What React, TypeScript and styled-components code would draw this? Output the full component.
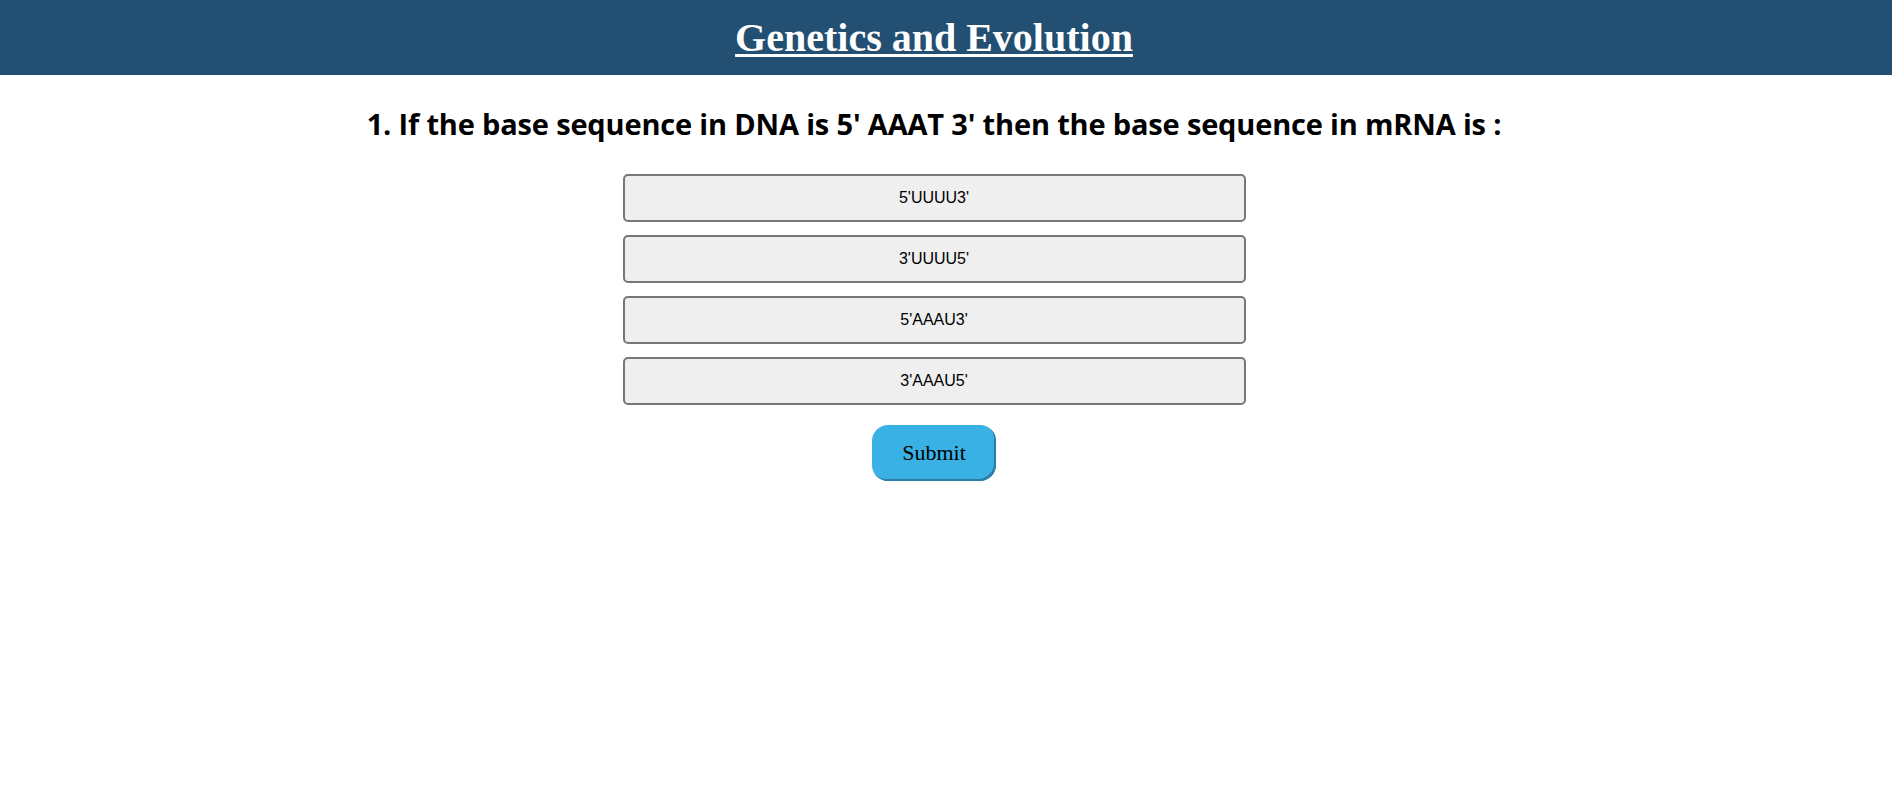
import React from "react";
import styled, { createGlobalStyle } from "styled-components";

const GlobalStyle = createGlobalStyle`
  html, body {
    margin: 0;
    padding: 0;
    background: #ffffff;
  }
  body {
    font-family: "Liberation Serif", "Times New Roman", serif;
  }
`;

const Header = styled.header`
  background: #234f72;
  height: 75px;
  box-sizing: border-box;
  padding: 15px 24px 0 0;
  display: flex;
  justify-content: center;
`;

const Title = styled.h1`
  margin: 0;
  font-family: "Liberation Serif", "Times New Roman", serif;
  font-weight: 700;
  font-size: 40px;
  line-height: 46px;
  color: #ffffff;
  text-decoration: underline;
  text-decoration-thickness: 3px;
  text-underline-offset: 3px;
`;

const Main = styled.main`
  display: flex;
  flex-direction: column;
  align-items: center;
  padding: 29px 24px 0 0;
`;

const Question = styled.h2`
  margin: 0 0 30px;
  font-family: "Open Sans", "Noto Sans", sans-serif;
  font-weight: 700;
  font-size: 29px;
  line-height: 40px;
  letter-spacing: -0.17px;
  color: #000000;
`;

const Options = styled.div`
  display: flex;
  flex-direction: column;
  gap: 13px;
  width: 623px;
`;

const Option = styled.button`
  height: 48px;
  width: 100%;
  box-sizing: border-box;
  border: 2px solid #777777;
  border-radius: 5px;
  background: #efefef;
  font-family: "Liberation Sans", Arial, sans-serif;
  font-size: 16px;
  color: #000000;
  cursor: pointer;
`;

const SubmitButton = styled.button`
  margin-top: 20px;
  width: 124px;
  height: 56px;
  border: none;
  border-radius: 16px;
  background: #3ab1e4;
  box-shadow: inset -2px -2px 0 #2a7ea8;
  font-family: "Liberation Serif", "Times New Roman", serif;
  font-size: 22px;
  color: #000000;
  cursor: pointer;
`;

const options = ["5'UUUU3'", "3'UUUU5'", "5'AAAU3'", "3'AAAU5'"];

export default function App() {
  return (
    <>
      <GlobalStyle />
      <Header>
        <Title>Genetics and Evolution</Title>
      </Header>
      <Main>
        <Question>
          1. If the base sequence in DNA is 5' AAAT 3' then the base sequence in mRNA is :
        </Question>
        <Options>
          {options.map((o) => (
            <Option key={o}>{o}</Option>
          ))}
        </Options>
        <SubmitButton>Submit</SubmitButton>
      </Main>
    </>
  );
}
